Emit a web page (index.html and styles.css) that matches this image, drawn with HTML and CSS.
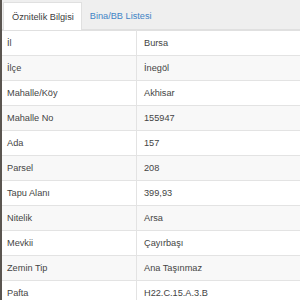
FILE: index.html
```html
<!DOCTYPE html>
<html>
<head>
<meta charset="utf-8">
<link rel="stylesheet" href="styles.css">
</head>
<body>
<div class="page">
  <div class="tabs">
    <div class="tab active">Öznitelik Bilgisi</div>
    <div class="tab link">Bina/BB Listesi</div>
  </div>
  <table class="info">
    <tr><td>İl</td><td>Bursa</td></tr>
    <tr><td>İlçe</td><td>İnegöl</td></tr>
    <tr><td>Mahalle/Köy</td><td>Akhisar</td></tr>
    <tr><td>Mahalle No</td><td>155947</td></tr>
    <tr><td>Ada</td><td>157</td></tr>
    <tr><td>Parsel</td><td>208</td></tr>
    <tr><td>Tapu Alanı</td><td>399,93</td></tr>
    <tr><td>Nitelik</td><td>Arsa</td></tr>
    <tr><td>Mevkii</td><td>Çayırbaşı</td></tr>
    <tr><td>Zemin Tip</td><td>Ana Taşınmaz</td></tr>
    <tr><td>Pafta</td><td>H22.C.15.A.3.B</td></tr>
  </table>
</div>
</body>
</html>
```

FILE: styles.css
```css
html, body {
  margin: 0;
  padding: 0;
  background: #fff;
}
.page {
  width: 300px;
  height: 300px;
  overflow: hidden;
  border-left: 2px solid #5a5550;
  box-sizing: border-box;
  font-family: "Liberation Sans", Arial, sans-serif;
  font-size: 9.2px;
  color: #444;
}
.tabs {
  display: flex;
  height: 30px;
  background: #efefef;
  border-bottom: 1px solid #e0e0e0;
  box-sizing: border-box;
  padding: 2px 0 0 1px;
  align-items: stretch;
}
.tab {
  padding: 0 7px 0 8px;
  display: flex;
  align-items: center;
  margin-bottom: -1px;
}
.tab.active {
  background: #fff;
  border: 1px solid #e0e0e0;
  border-bottom: none;
  color: #3d3d3d;
}
.tab.link {
  color: #3f84c6;
}
.info {
  width: 100%;
  border-collapse: collapse;
  border-top: 1px solid #e0e0e0;
}
.info td {
  height: 24px;
  padding: 0 0 0 5px;
  border-bottom: 1px solid #e3e3e3;
  vertical-align: middle;
  color: #444;
}
.info td:first-child {
  width: 129px;
  border-right: 1px solid #e3e3e3;
}
.info td:last-child {
  padding-left: 7px;
}
.info tr:nth-child(even) td {
  background: #f8f8f8;
}
```
